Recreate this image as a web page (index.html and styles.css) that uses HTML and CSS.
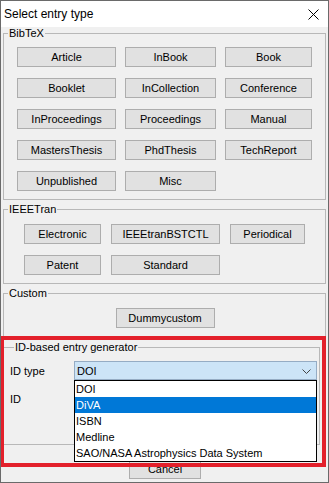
FILE: index.html
```html
<!DOCTYPE html>
<html lang="en">
<head>
    <meta charset="UTF-8">
    <title>Select entry type</title>
    <link rel="stylesheet" href="styles.css">
</head>
<body>

    <div class="window">
        <div class="titlebar">
            <span class="title">Select entry type</span>
            <svg class="close" width="11" height="11" viewBox="0 0 11 11">
                <path d="M0.5 0.5 L10.5 10.5 M10.5 0.5 L0.5 10.5" stroke="#000" stroke-width="1" fill="none"/>
            </svg>
        </div>

        <div class="content">
            <fieldset class="group">
                <legend>BibTeX</legend>
                <div class="buttons bibtex">
                    <button>Article</button>
                    <button>InBook</button>
                    <button>Book</button>
                    <button>Booklet</button>
                    <button>InCollection</button>
                    <button>Conference</button>
                    <button>InProceedings</button>
                    <button>Proceedings</button>
                    <button>Manual</button>
                    <button>MastersThesis</button>
                    <button>PhdThesis</button>
                    <button>TechReport</button>
                    <button>Unpublished</button>
                    <button>Misc</button>
                </div>
            </fieldset>

            <fieldset class="group">
                <legend>IEEETran</legend>
                <div class="buttons ieee">
                    <button>Electronic</button>
                    <button>IEEEtranBSTCTL</button>
                    <button>Periodical</button>
                    <button>Patent</button>
                    <button>Standard</button>
                </div>
            </fieldset>

            <fieldset class="group">
                <legend>Custom</legend>
                <div class="buttons custom">
                    <button>Dummycustom</button>
                </div>
            </fieldset>

            <fieldset class="group idgen">
                <legend>ID-based entry generator</legend>
                <div class="form-row">
                    <span class="label">ID type</span>
                    <div class="combo">
                        <span>DOI</span>
                        <svg class="chevron" width="9" height="5" viewBox="0 0 9 5">
                            <path d="M0.5 0.5 L4.5 4.5 L8.5 0.5" stroke="#444" stroke-width="1" fill="none"/>
                        </svg>
                        <ul class="popup">
                            <li>DOI</li>
                            <li class="selected">DiVA</li>
                            <li>ISBN</li>
                            <li>Medline</li>
                            <li>SAO/NASA Astrophysics Data System</li>
                        </ul>
                    </div>
                </div>
                <div class="form-row">
                    <span class="label">ID</span>
                    <input class="id-field" type="text">
                </div>
            </fieldset>

            <div class="actions">
                <button class="cancel">Cancel</button>
            </div>
        </div>

        <div class="highlight"></div>
    </div>

</body>
</html>
```

FILE: styles.css
```css
body {
    margin: 0;
    padding: 0;
    background-color: #f0f0f0;
    font-family: 'Liberation Sans', Arial, sans-serif;
    font-size: 11px;
    color: black;
}

.window {
    position: relative;
    width: 329px;
    height: 483px;
    box-sizing: border-box;
    border: 1px solid #6a6a6a;
    background-color: #f0f0f0;
    overflow: hidden;
}

.titlebar {
    height: 26px;
    background-color: white;
    display: flex;
    align-items: center;
    justify-content: space-between;
    padding: 0 9px 0 3px;
}

.title {
    font-size: 12px;
}

.close {
    margin-top: 1px;
}

.content {
    padding: 0 2px;
}

.group {
    margin: 3px 0 0 0;
    padding: 0;
    border: 1px solid #b8b8b8;
    min-width: 0;
}

.group:first-child {
    margin-top: 0;
}

.group legend {
    margin-left: 4px;
    padding: 0 1px;
    line-height: 12px;
    font-size: 11px;
}

button {
    font-family: inherit;
    font-size: 11px;
    color: black;
    background-color: #e1e1e1;
    border: 1px solid #adadad;
    border-radius: 0;
    height: 20px;
    padding: 0;
    margin: 0;
}

.buttons {
    display: grid;
    row-gap: 11px;
}

.bibtex {
    grid-template-columns: 99px 91px 87px;
    column-gap: 9px;
    padding: 8px 0 8px 13px;
}

.ieee {
    grid-template-columns: 77px 109px 75px;
    column-gap: 10px;
    padding: 9px 0 8px 20px;
}

.custom {
    grid-template-columns: 99px;
    justify-content: center;
    padding: 9px 0 8px 1px;
}

.idgen {
    margin-top: 4px;
    margin-right: 6px;
    padding: 8px 2px 36px 6px;
}

.form-row {
    display: grid;
    grid-template-columns: 64px 243px;
    align-items: center;
    height: 19px;
}

.form-row + .form-row {
    margin-top: 9px;
}

.combo {
    position: relative;
    height: 19px;
    box-sizing: border-box;
    border: 1px solid #95acc4;
    background-color: #cce4f7;
    display: flex;
    align-items: center;
    justify-content: space-between;
    padding: 0 5px 0 2px;
}

.chevron {
    margin-top: 1px;
}

.id-field {
    height: 19px;
    box-sizing: border-box;
    border: 1px solid #7a7a7a;
}

.popup {
    position: absolute;
    top: 18px;
    left: -1px;
    width: 243px;
    box-sizing: border-box;
    margin: 0;
    padding: 0;
    list-style: none;
    background-color: white;
    border: 1px solid black;
    z-index: 2;
}

.popup li {
    height: 16px;
    line-height: 16px;
    padding-left: 1px;
    white-space: nowrap;
}

.popup li.selected {
    background-color: #0078d7;
    color: white;
}

.actions {
    display: flex;
    justify-content: center;
    padding-top: 13px;
}

.cancel {
    width: 72px;
    height: 21px;
    margin-left: 1px;
}

.highlight {
    position: absolute;
    left: -1px;
    top: 335px;
    width: 326px;
    height: 131px;
    box-sizing: border-box;
    border: 4px solid #e3202b;
    z-index: 3;
}
```
